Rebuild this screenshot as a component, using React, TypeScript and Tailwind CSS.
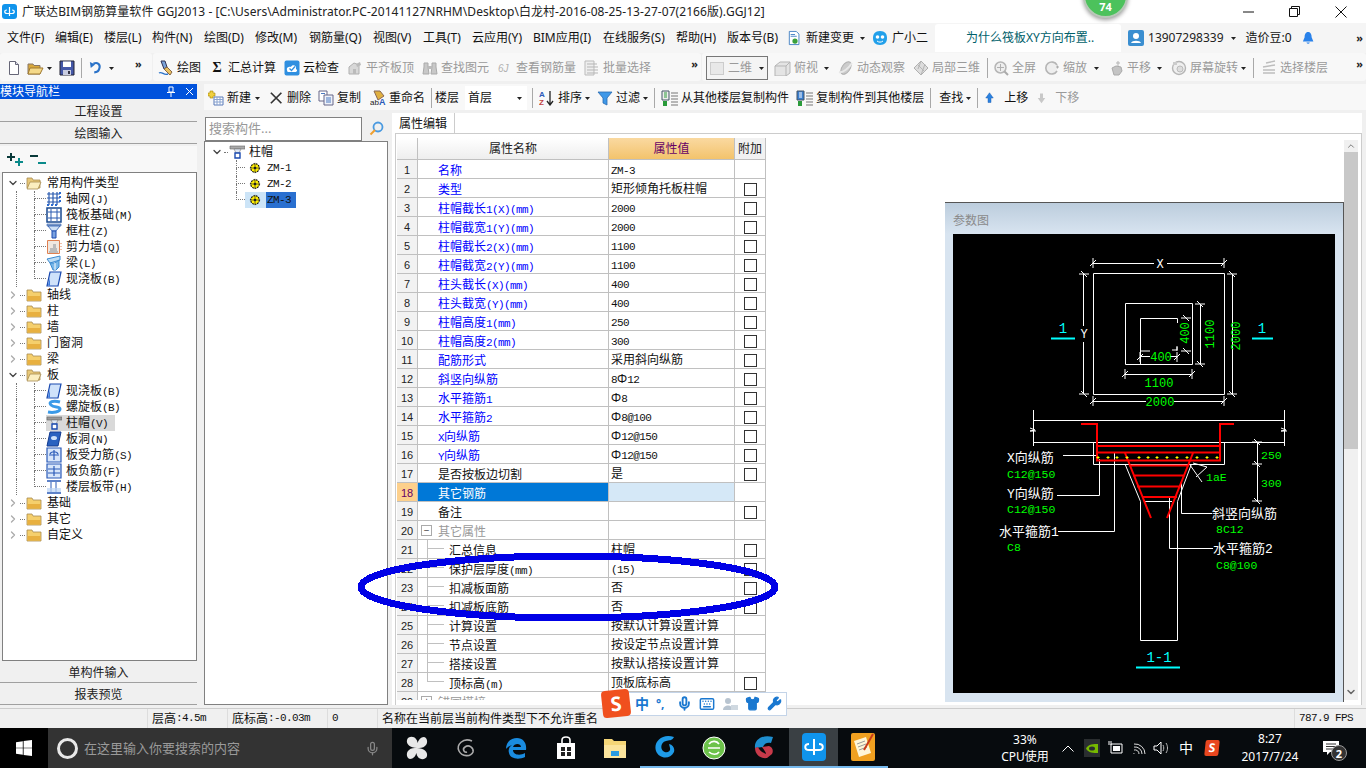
import type { ReactNode } from 'react'
import { ChevronDown, ChevronRight, Keyboard, Mic, Shirt, Wrench } from 'lucide-react'

const halfWidth = "font-['Liberation_Mono',monospace] text-[11px] tracking-[-0.6px]"

// latin runs in the old app are half-width bitmap text, so shrink them next to CJK
function T({ s }: { s: string }) {
  return (
    <>
      {s.split(/([\x20-\x7e]+)/).map((p, i) =>
        i % 2 ? (
          <span key={i} className={halfWidth}>
            {p}
          </span>
        ) : (
          p
        ),
      )}
    </>
  )
}

function S({ children, w = 16, h = 16, vb = '0 0 16 16' }: { children: ReactNode; w?: number; h?: number; vb?: string }) {
  return (
    <svg width={w} height={h} viewBox={vb} className="shrink-0">
      {children}
    </svg>
  )
}

function Caret() {
  return (
    <svg width="8" height="8" viewBox="0 0 8 8" className="shrink-0">
      <path d="M1 3h5L3.5 6z" fill="#222" />
    </svg>
  )
}

function More() {
  return <span className="text-[11px] font-bold leading-none tracking-[-1px] text-[#222]">»</span>
}

function Sep({ className }: { className?: string }) {
  return <div className={'h-5 w-px shrink-0 bg-[#a8a8a8] ' + (className ?? '')} />
}

// toolbar icons
const NewDoc = () => <S><path d="M3.5 1.5h6l3 3v10h-9z" fill="#fff" stroke="#667" /><path d="M9.5 1.5v3h3" fill="#dde" stroke="#667" /></S>
const OpenF = () => <S w={18}><path d="M1 4h5l1 1.5h6V14H1z" fill="#d8a83c" stroke="#876" /><path d="M3 8h13l-3 6H1z" fill="#f4d98a" stroke="#a07a30" /></S>
const Save = () => <S><path d="M1 1h14v14H1z" fill="#4458a8" stroke="#223" /><path d="M4 1.5h8v5.5H4z" fill="#fff" /><path d="M4 10h8v5H4z" fill="#c8cce0" /><path d="M9 11h2v3H9z" fill="#334" /></S>
const Undo = () => <S w={14}><path d="M5 3c5-2 8 1 7 5-.7 3-3 5-6 5" fill="none" stroke="#2a72c8" strokeWidth="2.4" /><path d="M1 1l1 7 5-4z" fill="#2a72c8" /></S>
const Pen = () => <S><path d="M3 1l4 0 2 6-3 2z" fill="#7aa2d8" stroke="#335" /><path d="M9 7l5 5-2 3-6-6z" fill="#e8c060" stroke="#864" /><path d="M1 13c3-2 5 3 9 1" fill="none" stroke="#2a72c8" strokeWidth="1.4" /></S>
const Cloud = () => <S><rect x="0.5" y="0.5" width="15" height="15" rx="2" fill="#2f8fe0" /><path d="M3 10c-1-3 3-4 4-3 1-3 6-2 5 2 2 1 1 3-1 3H5c-1 0-2 0-2-2z" fill="#fff" /><path d="M5.5 8.5l2 2 3.5-4" fill="none" stroke="#2f8fe0" strokeWidth="1.3" /></S>
const GrayAlign = () => <S><path d="M2 14V7l5-4 5 2v9z" fill="#d8d8d8" stroke="#b0b0b0" /><path d="M6 14V9h3v5zM9 4l4-2 1 3-4 2z" fill="#bbb" /></S>
const Binoc = () => <S><path d="M2 3h4v4l1 7H1l1-7zM10 3h4v4l1 7H9l1-7z" fill="#c8c8c8" stroke="#aaa" /><path d="M6 6h4v3H6z" fill="#bbb" /></S>
const GrayBars = () => <S><text x="1" y="12" fontSize="10" fill="#b0b0b0" fontFamily="Liberation Sans" fontStyle="italic">6J</text></S>
const GrayList = () => <S><path d="M1 1h9v14H1z" fill="#eee" stroke="#bbb" /><path d="M3 4h10M3 7h11M3 10h11M3 13h11" stroke="#b5b5b5" /></S>
const Cube = () => <S w={18}><path d="M1 6l5-4h10v11l-4 3H1z" fill="#e4e4e4" stroke="#b5b5b5" /><path d="M1 6h11v10M12 6l4-4" fill="none" stroke="#b5b5b5" /></S>
const Orbit = () => <S><ellipse cx="8" cy="8" rx="4" ry="7" transform="rotate(35 8 8)" fill="#ccc" stroke="#b0b0b0" /><path d="M1 12c4 1 10-4 13-9" fill="none" stroke="#e8e8e8" strokeWidth="2" /></S>
const Local3d = () => <S><path d="M8 1l7 7-7 7-7-7z" fill="#ddd" stroke="#b0b0b0" /><path d="M4 4l8 8M8 1L5 9M12 4L8 15" stroke="#b5b5b5" /></S>
const Lens = ({ plus }: { plus?: boolean }) => <S><circle cx="7.5" cy="7.5" r="5.5" fill="#eee" stroke="#b5b5b5" strokeWidth="1.5" /><path d="M11.5 11.5L15 15" stroke="#aaa" strokeWidth="2" />{plus && <path d="M7.5 4v7M4 7.5h7" stroke="#b0b0b0" />}</S>
const Zoom2 = () => <S><path d="M13 5a6 6 0 1 0 0 6" fill="#eee" stroke="#b5b5b5" strokeWidth="1.6" /><path d="M12 7h3M13.5 5.5v3" stroke="#aaa" /></S>
const HandI = () => <S><path d="M4 8l4-2 5 1 1 4-3 4H6z" fill="#c4c4c4" stroke="#aaa" /><path d="M10 1v5M8 3h4" stroke="#b5b5b5" /></S>
const Rotate = () => <S><circle cx="8" cy="8" r="6.5" fill="#efefef" stroke="#b5b5b5" strokeWidth="1.4" /><circle cx="9" cy="9" r="3" fill="#ddd" stroke="#bbb" /><path d="M2 2h4v3H2z" fill="#ccc" /></S>
const Floors = () => <S><path d="M5 3l9-2M2 7l12-2M2 10h12M2 13h12" stroke="#bdbdbd" strokeWidth="1.4" /></S>
const NewI = () => <S><path d="M1 1h3v2h2v3H4v2H1V6H-1V3h2z" transform="translate(1 0)" fill="#f0d040" stroke="#a80" strokeWidth=".6" /><path d="M6 7h9v8H6z" fill="#fff" stroke="#5a7ab8" /><path d="M6 9.5h9M6 12h9M9 7v8M12 7v8" stroke="#8aa4d0" /></S>
const Del = () => <S w={14}><path d="M1 2l12 12M13 2L1 14" stroke="#333" strokeWidth="2" /></S>
const CopyI = () => <S><path d="M1 1h8v10H1z" fill="#fff" stroke="#668" /><path d="M6 5h9v10H6z" fill="#eef2fa" stroke="#668" /><path d="M3 3.5h4M8 8h5M8 10h5M8 12h5" stroke="#4a78c0" /></S>
const Rename = () => <S><path d="M4 1l6 0 4 5-6 4z" fill="#e0b040" stroke="#865" /><text x="0" y="15" fontSize="8" fill="#222" fontFamily="Liberation Sans">ab</text><text x="9" y="15" fontSize="9" fontWeight="700" fill="#2a5ab8" fontFamily="Liberation Sans">A</text></S>
const Sort = () => <S><text x="0" y="7" fontSize="8" fontWeight="700" fill="#2a5ab8" fontFamily="Liberation Sans">A</text><text x="0" y="15" fontSize="8" fontWeight="700" fill="#c04040" fontFamily="Liberation Sans">Z</text><path d="M11 1v13M8 11l3 4 3-4" fill="none" stroke="#222" strokeWidth="1.3" /></S>
const Funnel = () => <S><path d="M1 2h14l-5 6v7l-4-2V8z" fill="#3f98e8" stroke="#2a6ab0" strokeWidth=".8" /></S>
const Stack = ({ flip }: { flip?: boolean }) => <S w={18}><path d="M1 1h7v9H1z" fill={flip ? '#3a7fd0' : '#eee'} stroke="#456" /><path d="M10 3h7M10 6h7M10 9h7M10 12h7M10 15h7" stroke="#777" strokeWidth="1.2" /><path d="M2 11h4v5H2z" fill="#2a9a3a" /><path d="M3 3h3M3 5h3M3 7h3" stroke={flip ? '#fff' : '#2a9a3a'} /></S>
const UpI = () => <S w={12}><path d="M6 1l5 7H8v6H4V8H1z" fill="#2a82e0" stroke="#1a5ab0" strokeWidth=".6" /></S>
const DownI = () => <S w={12}><path d="M6 15l5-7H8V2H4v6H1z" fill="#c8c8c8" /></S>

// tree icons
const FolderC = () => <S><path d="M1 3h5l1 2h8v9H1z" fill="#f5cf6c" stroke="#a78c50" strokeWidth=".8" /><path d="M1.5 9h13v4.5h-13z" fill="#e8b040" /></S>
const FolderO = () => <S><path d="M1 3h5l1 2h7v8H1z" fill="#e8c878" stroke="#a78c50" strokeWidth=".8" /><path d="M4 7h11l-3 7H1z" fill="#fbeec0" stroke="#a78c50" strokeWidth=".8" /></S>
const TGrid = () => <S><path d="M1 3h13M1 7h13M1 11h13M3 1v13M7 1v13M11 1v13" stroke="#2a5ab0" strokeWidth="1.2" /><path d="M13 1h2v2h-2zM13 5h2v2h-2zM13 9h2v2h-2zM1 13h2v2H1zM5 13h2v2H5zM9 13h2v2H9z" fill="#2a6ad0" /></S>
const TRaft = () => <S><path d="M1 1h14v14H1z" fill="#fff" stroke="#1a4a90" strokeWidth="1.5" /><path d="M5 2v12M11 2v12M2 5h12M2 11h12" stroke="#2a5ab0" /></S>
const TCol = () => <S><path d="M1 1h14v2H1z" fill="#9ab0d0" stroke="#2a5ab0" strokeWidth=".6" /><path d="M2 3l4 5h4l4-5z" fill="#cfe0f5" stroke="#2a5ab0" strokeWidth=".8" /><path d="M6 8h4v7H6z" fill="#7aa2e0" stroke="#1a4ab0" /></S>
const TWall = () => <S><path d="M1.5 1.5h12v13h-12z" fill="#f0e8e0" stroke="#e08050" /><path d="M3 12h9v2H3zM4 9h7v3H4zM7 5h3v4H7z" fill="#bbb" /><path d="M15 4v8" stroke="#e08050" strokeDasharray="1 2" /></S>
const TBeam = () => <S><path d="M1 4l13-3v4L4 8z" fill="#bcdcf5" stroke="#3a8ad0" /><path d="M4 8h5l4-3v7l-3 3H7z" fill="#7ab8e8" stroke="#3a8ad0" /><path d="M9 8v7" stroke="#fff" /></S>
const TSlab = () => <S><path d="M4 1h11l-3 14H1z" fill="#cfe2fa" stroke="#1a4ab0" strokeWidth="1.2" /><path d="M2 14L4 7v8z" fill="#3a7ae0" /></S>
const TSpiral = () => <S><path d="M14 3C7 1 2 3 5 6c3 3 9 1 9 4s-7 4-12 3" fill="none" stroke="#3a9ae8" strokeWidth="3" /></S>
const TCap = ({ gray }: { gray?: boolean }) => <S><path d="M1 2h15v3H1z" fill={gray ? '#999' : '#aaa'} stroke="#666" strokeWidth=".6" /><path d="M5 5h7l-2 4H7z" fill="#dfe8f5" stroke="#777" strokeWidth=".6" /><path d="M6 9h5v5H6z" fill="#fff" stroke="#1a4ab0" strokeWidth="1.4" /></S>
const THole = () => <S><path d="M4 1h11l-3 14H1z" fill="#2a62c0" stroke="#123a90" /><ellipse cx="8" cy="7" rx="3" ry="2" fill="#cfe2fa" /></S>
const TBox = ({ c }: { c: string }) => <S><path d="M1 1h14v14H1z" fill="#d8e6fa" stroke="#2a5ab8" strokeWidth="1.2" /><path d={c} fill="none" stroke="#2a5ab8" strokeWidth="1.2" /></S>
const TBand = () => <S><path d="M1 2h14M1 14h14" stroke="#2a5ab8" strokeWidth="1.6" /><path d="M5 3v10M10 3v10" stroke="#2a5ab8" /><path d="M1 9h14v4H1z" fill="#bcd4f5" opacity=".7" /></S>
const Gear = () => <S w={12} h={12} vb="0 0 14 14"><circle cx="7" cy="7" r="5" fill="#ffef00" stroke="#000" strokeWidth="1.3" strokeDasharray="2 1" /><circle cx="7" cy="7" r="1.6" fill="#000" /><path d="M7 1v12M1 7h12" stroke="#333" strokeWidth=".8" /></S>

function ToolBtn({ icon, label, gray, className }: { icon: ReactNode; label: string; gray?: boolean; className?: string }) {
  return (
    <div className={'flex shrink-0 items-center gap-[3px] ' + (className ?? '')}>
      {icon}
      <span className={gray ? 'whitespace-nowrap text-[#9a9a9a]' : 'whitespace-nowrap text-[#111]'}>{label}</span>
    </div>
  )
}

const menus = [
  { t: '文件(F)', w: 'w-[48px]' },
  { t: '编辑(E)', w: 'w-[49px]' },
  { t: '楼层(L)', w: 'w-[48px]' },
  { t: '构件(N)', w: 'w-[52px]' },
  { t: '绘图(D)', w: 'w-[51px]' },
  { t: '修改(M)', w: 'w-[54px]' },
  { t: '钢筋量(Q)', w: 'w-[64px]' },
  { t: '视图(V)', w: 'w-[50px]' },
  { t: '工具(T)', w: 'w-[49px]' },
  { t: '云应用(Y)', w: 'w-[61px]' },
  { t: 'BIM应用(I)', w: 'w-[70px]' },
  { t: '在线服务(S)', w: 'w-[73px]' },
  { t: '帮助(H)', w: 'w-[51px]' },
  { t: '版本号(B)', w: 'w-[61px]' },
]

function ElbowRow({ last, icon, label, sel }: { last?: boolean; icon: ReactNode; label: string; sel?: boolean }) {
  return (
    <div className="flex h-4 items-stretch">
      <div className="ml-[13px] w-[18px] border-l border-dotted border-[#777]" />
      <div className="w-[12px] shrink-0">
        <div className="h-2 border-b border-l border-dotted border-[#777]" />
        {!last && <div className="h-2 border-l border-dotted border-[#777]" />}
      </div>
      <div className={'flex items-center gap-[4px] ' + (sel ? 'w-[69px] bg-[#d9d9d9]' : '')}>
        {icon}
        <span className="whitespace-nowrap"><T s={label} /></span>
      </div>
    </div>
  )
}

function FolderRow({ open, label }: { open?: boolean; label: string }) {
  return (
    <div className="flex h-4 items-center">
      <div className="flex w-[16px] justify-end">
        {open ? <ChevronDown size={12} strokeWidth={2.6} className="text-[#444]" /> : <ChevronRight size={12} strokeWidth={2.6} className="text-[#aaa]" />}
      </div>
      <div className="mx-[1px] w-[5px] border-t border-dotted border-[#777]" />
      {open ? <FolderO /> : <FolderC />}
      <span className="ml-[5px]">{label}</span>
    </div>
  )
}

const Rb = 'Φ'
const rows: { n: number; name: string; val: string; cb: boolean; kind?: string }[] = [
  { n: 1, name: '名称', val: 'ZM-3', cb: false, kind: 'blue' },
  { n: 2, name: '类型', val: '矩形倾角托板柱帽', cb: true, kind: 'blue' },
  { n: 3, name: '柱帽截长1(X)(mm)', val: '2000', cb: true, kind: 'blue' },
  { n: 4, name: '柱帽截宽1(Y)(mm)', val: '2000', cb: true, kind: 'blue' },
  { n: 5, name: '柱帽截长2(X)(mm)', val: '1100', cb: true, kind: 'blue' },
  { n: 6, name: '柱帽截宽2(Y)(mm)', val: '1100', cb: true, kind: 'blue' },
  { n: 7, name: '柱头截长(X)(mm)', val: '400', cb: true, kind: 'blue' },
  { n: 8, name: '柱头截宽(Y)(mm)', val: '400', cb: true, kind: 'blue' },
  { n: 9, name: '柱帽高度1(mm)', val: '250', cb: true, kind: 'blue' },
  { n: 10, name: '柱帽高度2(mm)', val: '300', cb: true, kind: 'blue' },
  { n: 11, name: '配筋形式', val: '采用斜向纵筋', cb: true, kind: 'blue' },
  { n: 12, name: '斜竖向纵筋', val: `8${Rb}12`, cb: true, kind: 'blue' },
  { n: 13, name: '水平箍筋1', val: `${Rb}8`, cb: true, kind: 'blue' },
  { n: 14, name: '水平箍筋2', val: `${Rb}8@100`, cb: true, kind: 'blue' },
  { n: 15, name: 'X向纵筋', val: `${Rb}12@150`, cb: true, kind: 'blue' },
  { n: 16, name: 'Y向纵筋', val: `${Rb}12@150`, cb: true, kind: 'blue' },
  { n: 17, name: '是否按板边切割', val: '是', cb: true },
  { n: 18, name: '其它钢筋', val: '', cb: false, kind: 'sel' },
  { n: 19, name: '备注', val: '', cb: true },
  { n: 20, name: '其它属性', val: '', cb: false, kind: 'group' },
  { n: 21, name: '汇总信息', val: '柱帽', cb: true, kind: 'child' },
  { n: 22, name: '保护层厚度(mm)', val: '(15)', cb: true, kind: 'child' },
  { n: 23, name: '扣减板面筋', val: '否', cb: true, kind: 'child' },
  { n: 24, name: '扣减板底筋', val: '否', cb: true, kind: 'child' },
  { n: 25, name: '计算设置', val: '按默认计算设置计算', cb: false, kind: 'child' },
  { n: 26, name: '节点设置', val: '按设定节点设置计算', cb: false, kind: 'child' },
  { n: 27, name: '搭接设置', val: '按默认搭接设置计算', cb: false, kind: 'child' },
  { n: 28, name: '顶标高(m)', val: '顶板底标高', cb: true, kind: 'last' },
  { n: 29, name: '锚固搭接', val: '', cb: false, kind: 'groupPlus' },
]

function PropRow({ r }: { r: (typeof rows)[number] }) {
  const isChild = r.kind === 'child' || r.kind === 'last'
  const isGroup = r.kind === 'group' || r.kind === 'groupPlus'
  const sel = r.kind === 'sel'
  return (
    <div className="flex h-[19px] shrink-0">
      <div className={"flex w-[21px] items-center justify-center border-b border-r border-[#c0c0c0] pt-[2px] font-['Liberation_Sans',sans-serif] text-[11px] " + (sel ? 'bg-[#fdd08c] text-[#660066]' : 'bg-[#f2f2f2] text-[#222]')}>{r.n}</div>
      <div className={'flex w-[191px] items-stretch border-b border-r border-[#c0c0c0] ' + (sel ? 'bg-[#0078d7] text-white' : r.kind === 'blue' ? 'text-[#0000ff]' : isGroup ? 'text-[#999]' : 'text-[#111]')}>
        {isChild && (
          <>
            <div className="ml-[9px] w-[17px] shrink-0">
              <div className="h-[9px] border-b border-l border-[#c0c0c0]" />
              {r.kind === 'child' && <div className="h-[10px] border-l border-[#c0c0c0]" />}
            </div>
            <span className="ml-[5px] self-center whitespace-nowrap pt-[4px]"><T s={r.name} /></span>
          </>
        )}
        {isGroup && (
          <>
            <div className="ml-[3px] flex h-[11px] w-[11px] shrink-0 items-center justify-center self-center border border-[#aaa] bg-white text-[10px] leading-none text-[#444]">{r.kind === 'group' ? '−' : '+'}</div>
            <span className="ml-[6px] self-center whitespace-nowrap pt-[4px]"><T s={r.name} /></span>
          </>
        )}
        {!isChild && !isGroup && <span className="ml-[20px] self-center whitespace-nowrap pt-[4px]"><T s={r.name} /></span>}
      </div>
      <div className={'flex w-[126px] items-center border-b border-r border-[#c0c0c0] pl-[2px] pt-[2px] ' + (sel ? 'bg-[#d5e8f7]' : '')}>
        <span className="whitespace-nowrap"><T s={r.val} /></span>
      </div>
      <div className="flex w-[31px] items-center justify-center border-b border-r border-[#c0c0c0] pt-[2px]">
        {r.cb && <div className="h-[13px] w-[13px] border border-[#333] bg-white" />}
      </div>
    </div>
  )
}

function tickH(x: number, y: number) {
  return `M${x - 3} ${y + 3}L${x + 3} ${y - 3}M${x} ${y - 5}V${y + 5}`
}
function tickV(x: number, y: number) {
  return `M${x - 3} ${y - 3}L${x + 3} ${y + 3}M${x - 5} ${y}H${x + 5}`
}

function Drawing() {
  const white = [
    'M1093.5 273.5H1224.5V394.5H1093.5Z',
    'M1125.5 303.5H1192.5V364.5H1125.5Z',
    'M1140.5 364V318.5H1177.5V323',
    'M1093 263.5H1154M1167 263.5H1224',
    tickH(1093, 263), tickH(1224, 263),
    'M1083.5 274V326M1083.5 342V394',
    tickV(1084, 274), tickV(1084, 394),
    'M1232.5 274V394',
    tickV(1232, 274), tickV(1232, 394),
    'M1093 401.5H1146M1174 401.5H1224',
    tickH(1093, 401), tickH(1224, 401),
    'M1125 374.5H1192',
    tickH(1125, 374), tickH(1192, 374),
    'M1200.5 304V364',
    tickV(1200, 304), tickV(1200, 364),
    'M1140 351H1150M1177 346V350H1172M1177 351V347',
    'M1140 356.5H1150M1170 356.5H1177',
    tickH(1140, 357), tickH(1177, 357),
    tickV(1186, 318), tickV(1186, 351),
    // section
    'M1033.5 420.5H1284.5M1033.5 442.5H1284.5M1033.5 410V446M1284.5 410V446',
    'M1030 428l5 2-5 1 6 0M1281 428l5 2-5 1 6 0',
    'M1093.5 442V464.5H1224.5V442',
    'M1125 464L1140.5 501.5V640.5H1177.5V501.5L1191.5 464M1144 501.5H1172',
    // leaders
    'M1063 455.5H1098M1057 495.5H1099.5V459M1058 531.5H1114.5V453',
    'M1181.5 483V513.5H1212M1169.5 497V548.5H1213',
    // laE + height dim
    'M1190 465L1202 482M1207 467L1196 477M1193 463L1207 467',
    'M1257.5 442V501.5',
    tickV(1257, 442), tickV(1257, 464), tickV(1257, 501),
  ]
  const red = [
    'M1081 424H1097V460.5H1220V424H1234',
    'M1097 446H1220M1097 452.5H1220',
    'M1125 453L1151 518M1193 453L1167 518',
    'M1129 465.5H1189M1133 475.5H1185M1137 486.5H1181M1142 497H1177',
  ]
  const dots = [1098, 1108, 1117, 1127, 1139, 1148, 1157, 1167, 1177, 1187, 1197, 1207, 1217]
  const mono = "font-['Liberation_Mono',monospace]"
  const cjk = "font-['Liberation_Mono','Noto_Sans_CJK_SC',sans-serif]"
  return (
    <svg viewBox="953 234 382 459" className="block h-[459px] w-[382px]">
      <path d={white.join('')} fill="none" stroke="#fff" strokeWidth="1" />
      <path d={red.join('')} fill="none" stroke="#f00" strokeWidth="2" />
      {dots.map((x) => (
        <path key={x} d={`M${x - 1.5} 457.5h3M${x} 456v3`} stroke="#ff0" strokeWidth="1" />
      ))}
      <g className={mono} fontSize="12" fill="#0f0" textAnchor="middle">
        <text x="1160" y="406">2000</text>
        <text x="1159" y="387">1100</text>
        <text x="1161" y="361">400</text>
        <text transform="translate(1189 333) rotate(-90)">400</text>
        <text transform="translate(1214 334) rotate(-90)">1100</text>
        <text transform="translate(1240 336) rotate(-90)">2000</text>
      </g>
      <g className={mono} fontSize="12" fill="#fff" textAnchor="middle">
        <text x="1160" y="268">X</text>
        <text x="1084" y="338">Y</text>
      </g>
      <g className={mono} fontSize="14" fill="#0ff" textAnchor="middle">
        <text x="1063" y="333">1</text>
        <text x="1262" y="333">1</text>
        <text x="1159" y="662">1-1</text>
      </g>
      <path d="M1051 338.5H1075M1252 338.5H1273M1136 667.5H1180" stroke="#0ff" strokeWidth="2" />
      <g className={cjk} fontSize="13" fill="#fff">
        <text x="1007" y="462">X向纵筋</text>
        <text x="1007" y="498">Y向纵筋</text>
        <text x="999" y="536">水平箍筋1</text>
        <text x="1212" y="518">斜竖向纵筋</text>
        <text x="1213" y="553">水平箍筋2</text>
      </g>
      <g className={mono} fontSize="11.5" fill="#0f0">
        <text x="1007" y="478">C12@150</text>
        <text x="1007" y="513">C12@150</text>
        <text x="1007" y="551">C8</text>
        <text x="1216" y="533">8C12</text>
        <text x="1216" y="569">C8@100</text>
        <text x="1261" y="459">250</text>
        <text x="1261" y="487">300</text>
        <text x="1206" y="481">1aE</text>
      </g>
    </svg>
  )
}

const WinLogo = () => <S><path d="M0 2.2l6.8-1v6.5H0zM7.6 1.1L16 0v7.7H7.6zM0 8.3h6.8v6.5L0 13.8zM7.6 8.3H16V16l-8.4-1.1z" fill="#fff" /></S>

const Tray = {
  Pin: () => <S w={24} h={26} vb="0 0 24 26"><path d="M12 13C5 13 1 9 2 5c1-4 7-4 9-1 2 2 2 6 1 9zM12 13c0-7 3-11 7-11 4 1 4 7 1 9-2 2-5 2-8 2zM12 13c7 0 11 4 10 8-1 4-7 4-9 1-2-2-2-6-1-9zM12 13c0 7-3 11-7 11-4-1-4-7-1-9 2-2 5-2 8-2z" fill="#e8e8e8" /></S>,
  Swirl: () => <S w={22} h={22} vb="0 0 22 22"><path d="M17 4C8 0 1 8 4 14c3 6 12 6 14 1 1-4-4-8-8-5-3 2-1 6 2 5" fill="none" stroke="#aaa" strokeWidth="1.6" /></S>,
  Edge: () => <S w={24} h={24} vb="0 0 24 24"><path d="M2 13C2 5 8 2 13 2c6 0 10 5 9 12H9c0 5 7 6 12 3v4c-6 3-15 2-16-4-1-3 0-6 3-8-3 1-5 3-6 4zM9 11h8c0-4-7-4-8 0z" fill="#1a8ce0" /></S>,
  Store: () => <S w={22} h={24} vb="0 0 22 24"><path d="M2 7h18v16H2z" fill="#fff" /><path d="M7 7V4c0-4 8-4 8 0v3" fill="none" stroke="#fff" strokeWidth="1.6" /><path d="M6 11h4v4H6zM12 11h4v4h-4zM6 16h4v4H6zM12 16h4v4h-4z" fill="#222" /></S>,
  Folder: () => <S w={24} h={22} vb="0 0 24 22"><path d="M1 2h8l2 2h12v17H1z" fill="#f5d677" /><path d="M1 8h22v13H1z" fill="#fbe49c" /><path d="M8 14h8v5H8z" fill="#2a9be0" /></S>,
  GBlue: () => <S w={24} h={26} vb="0 0 24 26"><path d="M21 3C9-1 0 8 3 17c3 8 14 9 18 1 1-4-1-7-5-8l1 4c1 3-3 6-7 3-3-3-2-9 3-10 3-1 6 0 8-4z" fill="#1e9be8" /></S>,
  GreenE: () => <S w={24} h={26} vb="0 0 24 26"><ellipse cx="12" cy="14" rx="11" ry="11" fill="#6cc24a" stroke="#fff" /><path d="M6 14h12M7 10c3-4 8-3 10 0M7 18c3 3 8 3 10 0" fill="none" stroke="#fff" strokeWidth="1.6" /></S>,
  GRed: () => <S w={24} h={26} vb="0 0 24 26"><path d="M21 3C10 0 2 6 3 14l8-1c1-4 5-5 8-4z" fill="#1e8fd0" /><path d="M3 14c0 7 6 11 12 10l5-4c2-4 0-7-3-8l-7 1c2 3 4 5 4 7-3-1-7-4-8-7z" fill="#c83a4a" /></S>,
  App: () => <S w={24} h={28} vb="0 0 24 28"><rect x="0" y="0" width="24" height="28" rx="4" fill="#1094ec" /><path d="M12 6v16M7 11c-5 0-5 6 0 6h10c5 0 5-6 0-6" fill="none" stroke="#fff" strokeWidth="2" /></S>,
  Note: () => <S w={24} h={28} vb="0 0 24 28"><rect x="0" y="0" width="24" height="28" rx="2" fill="#f0a020" /><path d="M3 8l12-4 5 16-12 4z" fill="#fff6d8" /><path d="M6 11l8-3M7 14l8-3M8 17l8-3" stroke="#999" /><path d="M22 1L13 17" stroke="#c83a1a" strokeWidth="2" /></S>,
}

export default function App() {
  return (
    <div className="relative flex h-[768px] w-[1366px] flex-col overflow-hidden bg-[#f0f0f0] font-['Noto_Sans','Noto_Sans_CJK_SC',sans-serif] text-[12px] leading-none text-[#111]">
      {/* title bar */}
      <div className="flex h-[23px] shrink-0 items-center bg-white pl-[2px]">
        <svg width="15" height="15" viewBox="0 0 15 15" className="shrink-0">
          <rect width="15" height="15" rx="3" fill="#1094ec" />
          <path d="M7.5 3v9M5 6c-3 0-3 3.500 0 3.500h5c3 0 3-3.500 0-3.500" fill="none" stroke="#fff" strokeWidth="1.2" />
        </svg>
        <span className="ml-[5px] whitespace-nowrap tracking-[0.06px] text-[#222]">广联达BIM钢筋算量软件 GGJ2013 - [C:\Users\Administrator.PC-20141127NRHM\Desktop\白龙村-2016-08-25-13-27-07(2166版).GGJ12]</span>
        <div className="ml-auto flex items-center">
          <svg width="11" height="2" className="mr-[35px]"><path d="M0 1h11" stroke="#111" /></svg>
          <svg width="11" height="11" viewBox="0 0 11 11" className="mr-[35px]"><path d="M.5 2.500h8v8h-8zM2.500 2.500v-2h8v8h-2" fill="none" stroke="#111" /></svg>
          <svg width="12" height="12" viewBox="0 0 12 12" className="mr-[19px]"><path d="M.5.5l11 11M11.500.5l-11 11" stroke="#111" /></svg>
        </div>
      </div>

      {/* menu */}
      <div className="flex h-[30px] shrink-0 items-center bg-[#f5f5f5] pl-[7px]">
        {menus.map((m) => (
          <div key={m.t} className={'shrink-0 whitespace-nowrap ' + m.w}>{m.t}</div>
        ))}
        <S w={14}><path d="M1.500.5h8l3 3v12h-11z" fill="#fff" stroke="#3a7ac0" /><path d="M3 4h5M3 6h7" stroke="#3a7ac0" /><circle cx="8" cy="11.500" r="3" fill="#3aa03a" /></S>
        <span className="ml-[4px] whitespace-nowrap">新建变更</span>
        <div className="ml-[5px]"><Caret /></div>
        <div className="ml-[5px]"><S><path d="M8 1c5 0 7 3 7 7s-2 7-7 7-7-3-7-7 2-7 7-7z" fill="#22a0ea" /><circle cx="5.500" cy="7" r="1.800" fill="#fff" /><circle cx="10.500" cy="7" r="1.800" fill="#fff" /><path d="M5 11c2 1.500 4 1.500 6 0" stroke="#fff" fill="none" /></S></div>
        <span className="ml-[4px] whitespace-nowrap">广小二</span>
        <div className="ml-[7px] flex h-[28px] w-[186px] items-center rounded-t-[3px] bg-white pl-[31px] text-[#00606a]">为什么筏板XY方向布置..</div>
        <div className="ml-[7px]"><S><rect width="16" height="16" rx="2" fill="#3a8ed0" /><circle cx="8" cy="6" r="3" fill="#fff" /><path d="M3 13c1-3 9-3 10 0z" fill="#fff" /></S></div>
        <span className="ml-[4px] text-[#222]">13907298339</span>
        <div className="ml-[6px]"><Caret /></div>
        <span className="ml-[8px] whitespace-nowrap">造价豆:0</span>
        <div className="ml-[10px]"><S w={14}><path d="M7 1c3 0 4 3 4 6l2 5H1l2-5c0-3 1-6 4-6z" fill="#2a82ea" /><path d="M5 13c1 2 3 2 4 0z" fill="#2a82ea" /></S></div>
        <div className="ml-auto pr-[4px]"><More /></div>
      </div>

      {/* main toolbar */}
      <div className="flex h-[28px] shrink-0 items-center gap-px">
        <div className="flex h-full w-[152px] shrink-0 items-center rounded-[3px] bg-[#f8f8f8] pl-[6px] pt-[2px]">
          <NewDoc />
          <div className="ml-[4px]"><OpenF /></div>
          <div className="ml-[2px]"><Caret /></div>
          <div className="ml-[5px]"><Save /></div>
          <Sep className="ml-[6px]" />
          <div className="ml-[7px]"><Undo /></div>
          <div className="ml-[5px]"><Caret /></div>
          <div className="ml-[19px] -mt-2"><More /></div>
        </div>
        <div className="flex h-full w-[548px] shrink-0 items-center gap-2 rounded-[3px] bg-[#f8f8f8] pl-[5px] pt-[2px]">
          <ToolBtn icon={<Pen />} label="绘图" />
          <ToolBtn icon={<span className="flex w-4 justify-center font-['Liberation_Serif',serif] text-[14px] font-bold">Σ</span>} label="汇总计算" />
          <ToolBtn icon={<Cloud />} label="云检查" />
          <ToolBtn gray icon={<GrayAlign />} label="平齐板顶" />
          <ToolBtn gray icon={<Binoc />} label="查找图元" />
          <ToolBtn gray icon={<GrayBars />} label="查看钢筋量" />
          <ToolBtn gray icon={<GrayList />} label="批量选择" />
          <div className="ml-auto -mt-2 pr-[4px]"><More /></div>
        </div>
        <div className="flex h-full flex-1 items-center rounded-[3px] bg-[#f8f8f8] pl-[4px] pt-[2px]">
          <div className="flex h-[24px] w-[62px] shrink-0 items-center border border-[#777] bg-[#f4f4f4] pl-[3px]">
            <div className="h-[13px] w-[14px] border border-[#ccc] bg-[#e8e8e8]" />
            <span className="ml-[4px] text-[#9a9a9a]">二维</span>
            <div className="ml-[6px]"><Caret /></div>
          </div>
          <ToolBtn gray icon={<Cube />} label="俯视" className="ml-[5px]" />
          <div className="ml-[5px]"><Caret /></div>
          <ToolBtn gray icon={<Orbit />} label="动态观察" className="ml-[7px]" />
          <ToolBtn gray icon={<Local3d />} label="局部三维" className="ml-2" />
          <Sep className="ml-[7px]" />
          <ToolBtn gray icon={<Lens plus />} label="全屏" className="ml-[5px]" />
          <ToolBtn gray icon={<Zoom2 />} label="缩放" className="ml-2" />
          <div className="ml-[6px]"><Caret /></div>
          <ToolBtn gray icon={<HandI />} label="平移" className="ml-[7px]" />
          <div className="ml-[5px]"><Caret /></div>
          <ToolBtn gray icon={<Rotate />} label="屏幕旋转" className="ml-[7px]" />
          <div className="ml-[2px]"><Caret /></div>
          <Sep className="ml-[5px]" />
          <ToolBtn gray icon={<Floors />} label="选择楼层" className="ml-[7px]" />
          <div className="ml-auto -mt-2 pr-[4px]"><More /></div>
        </div>
      </div>

      <div className="h-[3px] shrink-0" />

      {/* work area */}
      <div className="flex min-h-0 flex-1">
        {/* module nav */}
        <div className="flex w-[197px] shrink-0 flex-col">
          <div className="flex h-[15px] shrink-0 items-center justify-between bg-[#0052dc] pr-[3px] text-white">
            <span>模块导航栏</span>
            <div className="flex items-center gap-[9px]">
              <svg width="10" height="11" viewBox="0 0 10 11"><path d="M3 1h4v5H3zM1 6.500h8M5 7v4" fill="none" stroke="#fff" /></svg>
              <svg width="9" height="9" viewBox="0 0 9 9"><path d="M1 1l7 7M8 1L1 8" stroke="#fff" /></svg>
            </div>
          </div>
          <div className="mt-[2px] flex h-[21px] shrink-0 items-center justify-center border-b border-[#a0a0a0] pt-[2px] text-[#222]">工程设置</div>
          <div className="mt-[1px] flex h-[21px] shrink-0 items-center justify-center border-b border-[#a0a0a0] pt-[2px] text-[#222]">绘图输入</div>
          <div className="mt-[2px] flex h-[26px] shrink-0 items-center gap-[7px] bg-[#f8f8f8] pl-[7px]">
            <svg width="16" height="15" viewBox="0 0 16 15"><path d="M4 1v8M0 5h8" stroke="#0a3a3a" strokeWidth="2" /><path d="M12 6v8M8 10h8" stroke="#0a8a8a" strokeWidth="2" /></svg>
            <svg width="16" height="15" viewBox="0 0 16 15"><path d="M0 4h8" stroke="#0a3a3a" strokeWidth="2" /><path d="M8 11h8" stroke="#0a8a8a" strokeWidth="2" /></svg>
          </div>
          <div className="ml-[2px] min-h-0 flex-1 border border-[#808080] bg-white pt-[2px]">
            <FolderRow open label="常用构件类型" />
            <ElbowRow icon={<TGrid />} label="轴网(J)" />
            <ElbowRow icon={<TRaft />} label="筏板基础(M)" />
            <ElbowRow icon={<TCol />} label="框柱(Z)" />
            <ElbowRow icon={<TWall />} label="剪力墙(Q)" />
            <ElbowRow icon={<TBeam />} label="梁(L)" />
            <ElbowRow last icon={<TSlab />} label="现浇板(B)" />
            <FolderRow label="轴线" />
            <FolderRow label="柱" />
            <FolderRow label="墙" />
            <FolderRow label="门窗洞" />
            <FolderRow label="梁" />
            <FolderRow open label="板" />
            <ElbowRow icon={<TSlab />} label="现浇板(B)" />
            <ElbowRow icon={<TSpiral />} label="螺旋板(B)" />
            <ElbowRow sel icon={<TCap gray />} label="柱帽(V)" />
            <ElbowRow icon={<THole />} label="板洞(N)" />
            <ElbowRow icon={<TBox c="M8 3v10M4 7c1-3 7-3 8 0M3 8h10" />} label="板受力筋(S)" />
            <ElbowRow icon={<TBox c="M2 6h12M2 10h12M8 3v10" />} label="板负筋(F)" />
            <ElbowRow last icon={<TBand />} label="楼层板带(H)" />
            <FolderRow label="基础" />
            <FolderRow label="其它" />
            <FolderRow label="自定义" />
          </div>
          <div className="mt-[1px] flex h-[21px] shrink-0 items-center justify-center border-b border-[#a0a0a0] pt-[2px] text-[#222]">单构件输入</div>
          <div className="mt-[1px] flex h-[21px] shrink-0 items-center justify-center border-b border-[#a0a0a0] pt-[2px] text-[#222]">报表预览</div>
          <div className="h-[3px] shrink-0" />
        </div>

        <div className="flex min-w-0 flex-1 flex-col pl-[7px]">
          {/* component toolbar */}
          <div className="flex h-[26px] shrink-0 items-center bg-[#f8f8f8] pl-[4px] pt-[2px]">
            <ToolBtn icon={<NewI />} label="新建" />
            <div className="ml-[3px]"><Caret /></div>
            <ToolBtn icon={<Del />} label="删除" className="ml-[8px]" />
            <ToolBtn icon={<CopyI />} label="复制" className="ml-[7px]" />
            <ToolBtn icon={<Rename />} label="重命名" className="ml-[9px]" />
            <Sep className="ml-[6px]" />
            <span className="ml-[3px] whitespace-nowrap">楼层</span>
            <div className="ml-[6px] flex h-[24px] w-[62px] shrink-0 items-center justify-between bg-white pl-[3px] pr-[3px]">
              <span>首层</span>
              <Caret />
            </div>
            <Sep className="ml-[5px]" />
            <ToolBtn icon={<Sort />} label="排序" className="ml-[6px]" />
            <div className="ml-[2px]"><Caret /></div>
            <ToolBtn icon={<Funnel />} label="过滤" className="ml-[5px]" />
            <div className="ml-[2px]"><Caret /></div>
            <Sep className="ml-[4px]" />
            <ToolBtn icon={<Stack />} label="从其他楼层复制构件" className="ml-[5px]" />
            <ToolBtn icon={<Stack flip />} label="复制构件到其他楼层" className="ml-[6px]" />
            <Sep className="ml-[6px]" />
            <span className="ml-[8px] whitespace-nowrap">查找</span>
            <div className="ml-[2px]"><Caret /></div>
            <Sep className="ml-[4px]" />
            <ToolBtn icon={<UpI />} label="" className="ml-[7px]" />
            <span className="ml-[4px] whitespace-nowrap">上移</span>
            <ToolBtn icon={<DownI />} label="" className="ml-[9px]" />
            <span className="ml-[3px] whitespace-nowrap text-[#9a9a9a]">下移</span>
          </div>

          <div className="flex min-h-0 flex-1">
            {/* component list */}
            <div className="mt-[6px] flex w-[184px] shrink-0 flex-col">
              <div className="flex h-[25px] shrink-0 items-center pl-px">
                <div className="flex h-[24px] w-[157px] items-center border border-[#808080] bg-white pl-[3px] text-[13px] text-[#999]">搜索构件...</div>
                <div className="ml-[5px] flex h-[24px] w-[18px] items-center justify-center">
                  <svg width="15" height="15" viewBox="0 0 15 15"><circle cx="9" cy="6" r="4.500" fill="none" stroke="#4a9ae0" strokeWidth="1.800" /><path d="M6 9L1.500 13.500" stroke="#f0a030" strokeWidth="2" /></svg>
                </div>
              </div>
              <div className="min-h-0 flex-1 border border-[#808080] bg-white pt-[2px]">
                <div className="flex h-4 items-center pl-[6px]">
                  <ChevronDown size={12} strokeWidth={2.6} className="text-[#444]" />
                  <div className="mx-px w-[4px] border-t border-dotted border-[#777]" />
                  <TCap />
                  <span className="ml-[4px]">柱帽</span>
                </div>
                {['ZM-1', 'ZM-2', 'ZM-3'].map((z, i) => (
                  <div key={z} className="flex h-4 items-stretch">
                    <div className="ml-[31px] w-[9px] shrink-0">
                      <div className="h-2 border-b border-l border-dotted border-[#777]" />
                      {i < 2 && <div className="h-2 border-l border-dotted border-[#777]" />}
                    </div>
                    <div className={i === 2 ? 'flex items-center bg-[#cce4f7] pl-[4px]' : 'flex items-center pl-[4px]'}>
                      <Gear />
                      <span className={i === 2 ? 'ml-[5px] flex h-full items-center bg-[#2a70d0] pl-[1px] pr-[5px] ' + halfWidth : 'ml-[5px] pl-[1px] ' + halfWidth}>{z}</span>
                    </div>
                  </div>
                ))}
              </div>
            </div>

            {/* property editor */}
            <div className="ml-[4px] mt-[3px] flex min-w-0 flex-1 flex-col pr-[4px]">
              <div className="flex h-[20px] shrink-0">
                <div className="flex w-[63px] items-center justify-center border-r border-[#ccc] bg-white pt-[1px]">属性编辑</div>
                <div className="flex-1 bg-white" />
              </div>
              <div className="flex min-h-0 flex-1 bg-white">
                <div className="w-[3px] shrink-0" />
                <div className="flex min-w-0 flex-1 items-start overflow-hidden border-l border-r border-t border-[#ccc] bg-white pb-[2px]">
                  <div className="flex h-[566px] w-[370px] shrink-0 flex-col overflow-hidden pl-[1px] pt-[4px]">
                    <div className="flex h-[22px] shrink-0">
                      <div className="w-[21px] border-b border-r border-[#c0c0c0] bg-gradient-to-b from-white to-[#eeeeee]" />
                      <div className="flex w-[191px] items-center justify-center border-b border-r border-[#c0c0c0] bg-gradient-to-b from-white to-[#eeeeee] text-[#222]">属性名称</div>
                      <div className="flex w-[126px] items-center justify-center border-b border-r border-[#c0c0c0] bg-gradient-to-b from-[#fad9a0] to-[#f3c36b] text-[#660066]">属性值</div>
                      <div className="flex w-[31px] items-center justify-center border-b border-r border-[#c0c0c0] bg-[#f2f2f2] text-[#222]">附加</div>
                    </div>
                    {rows.map((r) => (
                      <PropRow key={r.n} r={r} />
                    ))}
                  </div>

                  {/* parameter diagram */}
                  <div className="ml-[179px] mt-[68px] flex h-[500px] w-[399px] shrink-0 flex-col border-r border-t border-[#555] bg-[#d8e4f0] pb-[8px] pl-[8px] pr-[8px]">
                    <div className="-ml-[8px] -mr-[8px] flex h-[31px] shrink-0 items-center bg-gradient-to-b from-[#bccddd] to-[#d8e4f0] pl-[8px] pt-1 text-[#8a8a8a]">参数图</div>
                    <div className="h-[459px] w-[382px] shrink-0 bg-black">
                      <Drawing />
                    </div>
                  </div>

                  <div className="mt-[6px] flex h-[560px] w-[14px] shrink-0 flex-col">
                    <div className="flex h-[12px] items-center justify-center bg-[#f0f0f0]"><ChevronDown size={10} className="rotate-180 text-[#666]" /></div>
                    <div className="h-[297px] bg-[#c8c8c8]" />
                    <div className="flex-1 bg-[#f0f0f0]" />
                    <div className="flex h-[16px] items-center justify-center bg-[#f0f0f0]"><ChevronDown size={12} strokeWidth={3} className="text-[#666]" /></div>
                  </div>
                </div>
              </div>
            </div>
          </div>
          <div className="h-[3px] shrink-0" />
        </div>
      </div>

      {/* status bar */}
      <div className="flex h-[20px] shrink-0 gap-[2px] border-t border-[#ccc] bg-[#f0f0f0]">
        <div className="w-[148px] border-r border-[#ddd]" />
        <div className="flex w-[78px] items-center border-r border-[#ddd] pl-[2px]"><T s="层高:4.5m" /></div>
        <div className="flex w-[98px] items-center border-r border-[#ddd] pl-[2px]"><T s="底标高:-0.03m" /></div>
        <div className="flex w-[48px] items-center border-r border-[#ddd] pl-[2px]"><T s="0" /></div>
        <div className="flex flex-1 items-center border-r border-[#ddd] pl-[2px]">名称在当前层当前构件类型下不允许重名</div>
        <div className={'flex w-[69px] items-center pl-[2px] ' + halfWidth}>787.9 FPS</div>
      </div>

      {/* taskbar */}
      <div className="flex h-[40px] shrink-0 items-stretch bg-[#070b0e] text-white">
        <div className="flex w-[48px] items-center justify-center bg-black"><WinLogo /></div>
        <div className="flex w-[344px] items-center bg-[#333333] pl-[9px] text-[#9a9a9a]">
          <div className="h-[21px] w-[21px] rounded-full border-[3px] border-[#e8e8e8]" />
          <span className="ml-[6px] text-[13px]">在这里输入你要搜索的内容</span>
          <div className="ml-auto pr-[12px]"><Mic size={15} className="text-[#888]" /></div>
        </div>
        <div className="flex w-[49.6px] items-center justify-center"><Tray.Pin /></div>
        <div className="flex w-[49.6px] items-center justify-center"><Tray.Swirl /></div>
        <div className="flex w-[49.6px] items-center justify-center"><Tray.Edge /></div>
        <div className="flex w-[49.6px] items-center justify-center"><Tray.Store /></div>
        <div className="flex w-[49.6px] items-center justify-center"><Tray.Folder /></div>
        <div className="flex w-[49.6px] items-center justify-center border-b-2 border-[#76b9ed]"><Tray.GBlue /></div>
        <div className="flex w-[49.6px] items-center justify-center border-b-2 border-[#76b9ed]"><Tray.GreenE /></div>
        <div className="flex w-[49.6px] items-center justify-center border-b-2 border-[#76b9ed]"><Tray.GRed /></div>
        <div className="flex w-[49.6px] items-center justify-center border-b-2 border-[#76b9ed] bg-[#3a4044]"><Tray.App /></div>
        <div className="flex w-[49.6px] items-center justify-center border-b-2 border-[#76b9ed]"><Tray.Note /></div>

        <div className="ml-[107px] flex w-[60px] flex-col items-center justify-center gap-[5px]">
          <span>33%</span>
          <span>CPU使用</span>
        </div>
        <div className="ml-[7px] flex items-center">
          <svg width="12" height="7" viewBox="0 0 12 7"><path d="M.5 6.500L6 1l5.500 5.500" fill="none" stroke="#fff" /></svg>
          <div className="ml-[10px] flex h-[18px] w-[16px] items-center justify-center bg-[#2a2e30]">
            <svg width="14" height="11" viewBox="0 0 14 11"><path d="M1 5.500C3 1 9 1 13 1v9C9 10 3 10 1 5.500z" fill="#76b900" /><ellipse cx="7" cy="5.500" rx="3" ry="2" fill="#2a2e30" /></svg>
          </div>
          <svg width="16" height="14" viewBox="0 0 16 14" className="ml-[8px]"><path d="M3 3h11v9H3z" fill="none" stroke="#fff" /><path d="M5 5h7v5H5z" fill="#fff" /><path d="M1 0v4M3 0v4" stroke="#fff" /></svg>
          <svg width="16" height="14" viewBox="0 0 16 14" className="ml-[8px]"><path d="M2 13a2 2 0 0 1 0-1M2 9a4 4 0 0 1 5 4M2 6a7 7 0 0 1 8 7M2 3a10 10 0 0 1 11 10" fill="none" stroke="#ddd" /></svg>
          <svg width="16" height="14" viewBox="0 0 16 14" className="ml-[5px]"><path d="M1 5h3l4-4v12L4 9H1z" fill="none" stroke="#fff" /><path d="M10 4c1 2 1 4 0 6M13 2c2 3 2 7 0 10" fill="none" stroke="#bbb" /></svg>
          <span className="ml-[10px] text-[14px]">中</span>
          <div className="ml-[12px] flex h-[16px] w-[14px] skew-x-[-6deg] items-center justify-center rounded-[2px] bg-[#e8461e] text-[12px] font-bold">S</div>
        </div>
        <div className="ml-[18px] flex w-[66px] flex-col items-center justify-center gap-[6px]">
          <span>8:27</span>
          <span>2017/7/24</span>
        </div>
        <div className="relative ml-[10px] flex flex-1 items-center">
          <svg width="16" height="14" viewBox="0 0 16 14" className="ml-[10px]"><path d="M0 0h16v11H7l-3 3v-3H0z" fill="#fff" /><path d="M3 3h10M3 5.500h10M3 8h10" stroke="#333" /></svg>
          <div className="absolute left-[18px] top-[17px] flex h-[16px] w-[16px] items-center justify-center rounded-full border border-[#999] bg-[#333] text-[11px] font-bold">2</div>
        </div>
      </div>

      {/* floating score ball */}
      <div className="absolute left-[1083px] top-[-27px] flex h-[45px] w-[45px] items-end justify-center rounded-full border-2 border-[#b8c8b8] bg-[#4cc25c] pb-[4px] text-[11px] font-bold text-white shadow-[0_2px_4px_rgba(0,0,0,0.4)]">74</div>

      {/* hand-drawn ellipse over the table */}
      <svg className="pointer-events-none absolute left-[354px] top-[550px]" width="428" height="76" viewBox="354 550 428 76" shapeRendering="crispEdges">
        <ellipse cx="568" cy="587" rx="207" ry="31" fill="none" stroke="#0000e6" strokeWidth="7" />
      </svg>

      {/* IME bar */}
      <div className="absolute left-[602px] top-[690px] flex items-center">
        <div className="z-10 flex h-[27px] w-[28px] rotate-[-6deg] items-center justify-center rounded-[4px] bg-[#f0501e] text-[20px] font-bold text-white">S</div>
        <div className="-ml-[7px] flex h-[24px] w-[164px] items-center gap-[7px] border border-[#c4d4e8] bg-white pl-[11px] text-[#1a78d0]">
          <span className="text-[14px] font-bold">中</span>
          <span className="w-[14px] text-[12px] font-bold">°,</span>
          <Mic size={15} strokeWidth={3} />
          <Keyboard size={16} strokeWidth={2.2} />
          <svg width="16" height="14" viewBox="0 0 16 14"><circle cx="6" cy="4" r="3" fill="#b8c4d0" /><path d="M1 13c0-6 10-6 10 0z" fill="#b8c4d0" /><path d="M9 8h7v5H9z" fill="#cfd8e0" /></svg>
          <Shirt size={15} fill="currentColor" />
          <Wrench size={15} fill="currentColor" />
        </div>
      </div>
    </div>
  )
}
